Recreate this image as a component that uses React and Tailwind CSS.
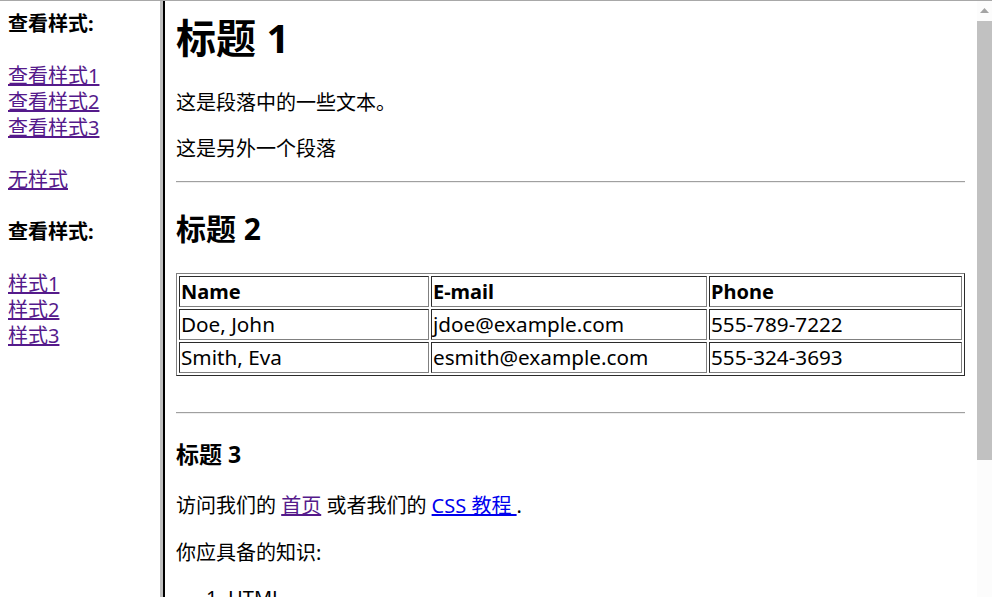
import React from 'react';

const fontStack = "font-['Noto_Sans','Noto_Sans_CJK_SC',sans-serif]";

const visited = 'text-[#551a8b] underline';
const fresh = 'text-[#0000ee] underline';

const rows = [
  { name: 'Doe, John', email: 'jdoe@example.com', phone: '555-789-7222' },
  { name: 'Smith, Eva', email: 'esmith@example.com', phone: '555-324-3693' },
];

// 单元格：内凹边框
const cell = 'border border-t-[#2b2b2b] border-l-[#2b2b2b] border-r-[#808080] border-b-[#808080] p-px leading-[27px] text-left align-top';

const Sidebar = () => (
  <div className="w-[160px] shrink-0 pl-[8px] pt-[10px] flex flex-col text-[20px] leading-[26px] text-black">
    <b className="font-bold">查看样式:</b>
    <a href="#" className={`mt-[26px] self-start ${visited}`}>查看样式1</a>
    <a href="#" className={`self-start ${visited}`}>查看样式2</a>
    <a href="#" className={`self-start ${visited}`}>查看样式3</a>
    <a href="#" className={`mt-[26px] self-start ${visited}`}>无样式</a>
    <b className="mt-[26px] font-bold">查看样式:</b>
    <a href="#" className={`mt-[26px] self-start ${visited}`}>样式1</a>
    <a href="#" className={`self-start ${visited}`}>样式2</a>
    <a href="#" className={`self-start ${visited}`}>样式3</a>
  </div>
);

const Scrollbar = () => (
  <div className="w-[15px] shrink-0 flex flex-col items-stretch bg-[#fcfcfc]">
    <div className="h-[20px] flex items-center justify-center">
      <svg width="9" height="6" viewBox="0 0 9 6">
        <polygon points="4.5,0 9,5 0,5" fill="#a3a3a3" />
      </svg>
    </div>
    <div className="h-[439px] bg-[#c1c1c1]" />
  </div>
);

const MainFrame = () => (
  <div className="flex-1 flex min-w-0">
    <div className="flex-1 pl-[11px] pr-[12px] text-[20px] leading-[26px] text-black min-w-0">
      <h1 className="mt-[11px] text-[40px] leading-[52px] font-bold">标题 1</h1>
      <p className="mt-[26px]">这是段落中的一些文本。</p>
      <p className="mt-[20px]">这是另外一个段落</p>
      <hr className="mt-[19px] border-0 border-t border-t-[#a0a0a0] border-b border-b-[#eeeeee] h-[2px]" />
      <h2 className="mt-[26px] text-[30px] leading-[40px] font-bold">标题 2</h2>

      <table className="mt-[24px] w-[789px] table-fixed border-separate border-spacing-[2px] border border-t-[#808080] border-l-[#808080] border-r-[#2b2b2b] border-b-[#2b2b2b]">
        <thead>
          <tr>
            <th className={`${cell} w-[250px] font-bold`}>Name</th>
            <th className={`${cell} w-[276px] font-bold`}>E-mail</th>
            <th className={`${cell} w-[253px] font-bold`}>Phone</th>
          </tr>
        </thead>
        <tbody>
          {rows.map((r) => (
            <tr key={r.email} className="text-[20.7px]">
              <td className={cell}>{r.name}</td>
              <td className={cell}>{r.email}</td>
              <td className={cell}>{r.phone}</td>
            </tr>
          ))}
        </tbody>
      </table>

      <hr className="mt-[36px] border-0 border-t border-t-[#a0a0a0] border-b border-b-[#eeeeee] h-[2px]" />
      <h3 className="mt-[25px] text-[23px] leading-[31px] font-bold">标题 3</h3>
      <p className="mt-[23px]">
        访问我们的 <a href="#" className={visited}>首页</a> 或者我们的 <a href="#" className={fresh}>CSS 教程 </a>.
      </p>
      <p className="mt-[21px]">你应具备的知识:</p>
      <ol className="mt-[19px] pl-[52px] list-decimal">
        <li>HTML</li>
        <li>CSS</li>
      </ol>
    </div>
    <Scrollbar />
  </div>
);

export default function App() {
  return (
    <div className={`${fontStack} w-[992px] h-[597px] overflow-hidden bg-white border-t border-t-[#a8a8a8] flex`}>
      <Sidebar />
      {/* 框架分隔条 */}
      <div className="w-[3px] shrink-0 bg-[#c0c0c0]" />
      <div className="w-[2px] shrink-0 bg-black" />
      <MainFrame />
    </div>
  );
}
